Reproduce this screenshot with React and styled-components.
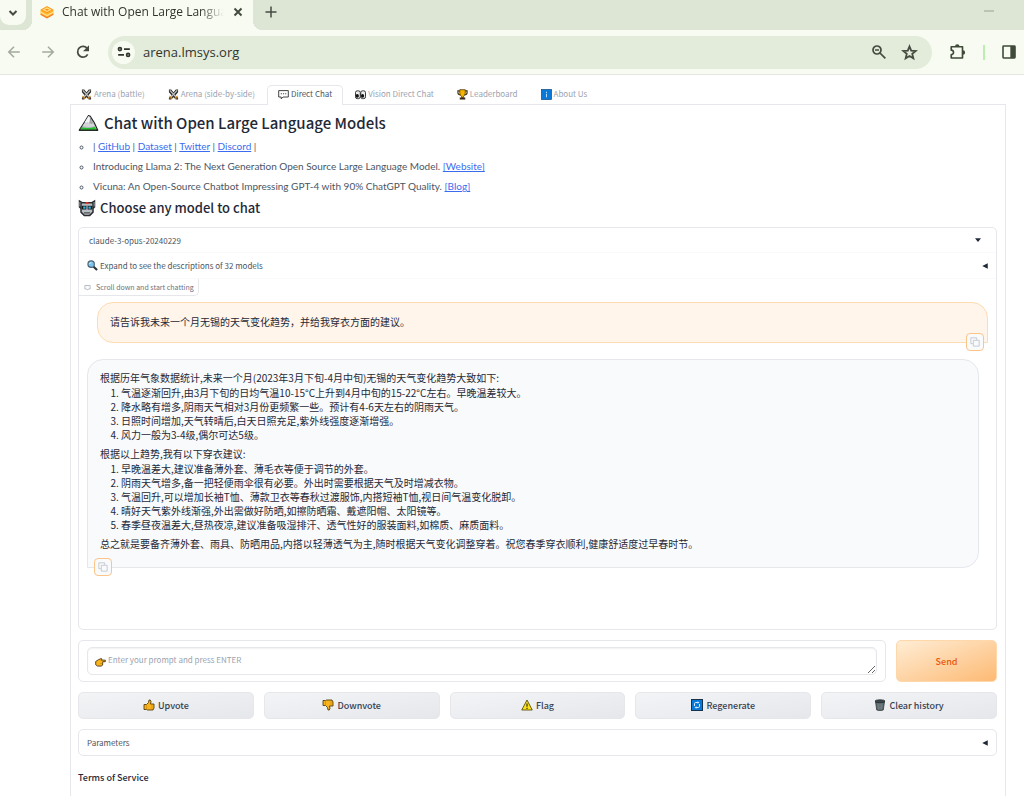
import React from 'react';
import styled, { createGlobalStyle, css } from 'styled-components';

const colors = {
  strip: '#dde6d5',
  toolbar: '#f8fbf1',
  pill: '#e3ecdb',
  chrome: '#454b41',
  border: '#e5e7eb',
  text: '#1f2937',
  body: '#4b5563',
  muted: '#9ca3af',
  link: '#3b6cf0',
};

const GlobalStyle = createGlobalStyle`
  * {
    box-sizing: border-box;
  }
  body {
    margin: 0;
    background: #fff;
    color: ${colors.text};
    font-family: 'Noto Sans CJK SC', 'Open Sans', sans-serif;
    font-size: 10px;
  }
  button, select, textarea {
    font-family: inherit;
    color: inherit;
  }
`;

const ButtonReset = css`
  display: flex;
  align-items: center;
  border: 0;
  padding: 0;
  background: none;
  cursor: pointer;
`;

/* browser frame */

const TabStrip = styled.div`
  display: flex;
  align-items: flex-start;
  height: 30px;
  background: ${colors.strip};
  font-family: 'Open Sans', 'Noto Sans', sans-serif;
`;

const TabSearch = styled.button`
  ${ButtonReset};
  justify-content: center;
  width: 26px;
  height: 25px;
  border-radius: 0 0 9px 9px;
  background: ${colors.toolbar};
`;

const BrowserTab = styled.div`
  position: relative;
  display: flex;
  align-items: center;
  gap: 8px;
  width: 221px;
  height: 30px;
  margin-left: 6px;
  padding: 0 9px 6px 8px;
  background: ${colors.toolbar};
  &::before,
  &::after {
    content: '';
    position: absolute;
    bottom: 0;
    width: 9px;
    height: 9px;
  }
  &::before {
    right: 100%;
    background: radial-gradient(circle at 0 0, transparent 9px, ${colors.toolbar} 9px);
  }
  &::after {
    left: 100%;
    background: radial-gradient(circle at 100% 0, transparent 9px, ${colors.toolbar} 9px);
  }
`;

const TabTitle = styled.span`
  flex: 1;
  overflow: hidden;
  white-space: nowrap;
  font-size: 12px;
  line-height: 18px;
  color: #30352d;
  mask-image: linear-gradient(to right, #000 85%, transparent);
`;

const StripButton = styled.button`
  ${ButtonReset};
  height: 24px;
  margin-left: ${props => props.$left || 0}px;
`;

const Spacer = styled.span`
  flex: 1;
`;

const Minimize = styled.button`
  ${ButtonReset};
  width: 10px;
  height: 22px;
  margin-right: 30px;
`;

const Toolbar = styled.div`
  display: flex;
  align-items: center;
  height: 45px;
  padding: 0 7px;
  background: ${colors.toolbar};
  border-bottom: 1px solid #e4e9df;
`;

const NavButtons = styled.div`
  display: flex;
  gap: 20px;
  margin-right: 17px;
`;

const IconButton = styled.button`
  ${ButtonReset};
`;

const AddressBar = styled.div`
  flex: 1;
  display: flex;
  align-items: center;
  gap: 8px;
  height: 33px;
  padding: 0 14px 0 4px;
  border-radius: 17px;
  background: ${colors.pill};
  font-family: 'Open Sans', 'Noto Sans', sans-serif;
`;

const SiteInfo = styled.button`
  ${ButtonReset};
  justify-content: center;
  width: 23px;
  height: 23px;
  border-radius: 50%;
  background: ${colors.toolbar};
`;

const Address = styled.input`
  flex: 1;
  min-width: 0;
  border: 0;
  padding: 0;
  outline: 0;
  background: none;
  font-family: inherit;
  font-size: 13px;
  color: #30352d;
`;

const AddressActions = styled.div`
  display: flex;
  gap: 14px;
`;

const ToolbarEnd = styled.div`
  display: flex;
  align-items: center;
  gap: 16px;
  margin-left: 17px;
`;

const Divider = styled.span`
  width: 2px;
  height: 15px;
  background: #bdeeb0;
`;

/* page */

const Page = styled.main`
  margin: 10px 18px 0 70px;
`;

const Tabs = styled.nav`
  display: flex;
  gap: 1px;
  height: 20px;
  border-bottom: 1px solid ${colors.border};
`;

const Tab = styled.button`
  ${ButtonReset};
  gap: 2px;
  height: 20px;
  padding: 0 10px 3px;
  border: 1px solid transparent;
  border-bottom: 0;
  border-radius: 5px 5px 0 0;
  font-size: 8px;
  line-height: 12px;
  color: ${colors.muted};
  white-space: nowrap;
  ${props =>
    props.$active &&
    css`
      border-color: ${colors.border};
      background: #fff;
      color: ${colors.body};
    `};
`;

const TabPanel = styled.section`
  padding: 7px 8px 11px 7px;
  border: 1px solid ${colors.border};
  border-top: 0;
`;

const Title = styled.h1`
  display: flex;
  align-items: center;
  gap: 5px;
  margin: 0;
  font-size: 15px;
  font-weight: 500;
  line-height: 20px;
`;

const Subtitle = styled(Title)`
  gap: 4px;
  font-size: 13px;
`;

const Notices = styled.ul`
  margin: 3px 0 2px;
  padding-left: 15px;
  list-style: circle;
  font-family: Lato, 'Open Sans', sans-serif;
  font-size: 10px;
  line-height: 20px;
  color: ${colors.body};
`;

const Link = styled.a`
  color: ${colors.link};
  text-decoration: underline;
`;

const ChatPanel = styled.div`
  height: 403px;
  margin-top: 9px;
  border: 1px solid ${colors.border};
  border-radius: 5px;
`;

const ModelRow = styled.label`
  display: flex;
  align-items: center;
  height: 25px;
  padding: 0 15px 0 10px;
  border-bottom: 1px solid #f9fafb;
`;

const ModelSelect = styled.select`
  flex: 1;
  appearance: none;
  border: 0;
  padding: 0;
  outline: 0;
  background: none;
  font-size: 8px;
  color: ${colors.body};
`;

const Accordion = styled.button`
  ${ButtonReset};
  gap: 2px;
  width: 100%;
  height: 26px;
  padding: 0 8px;
  border-bottom: 1px solid #f9fafb;
  font-size: 8px;
  color: ${colors.body};
`;

const ChatLabel = styled.div`
  display: flex;
  align-items: center;
  gap: 5px;
  width: fit-content;
  height: 17px;
  padding: 0 4px 0 5px;
  border: solid ${colors.border};
  border-width: 0 1px 1px 0;
  border-radius: 0 0 5px 0;
  font-size: 7px;
  line-height: 14px;
  color: #6b7280;
`;

const Messages = styled.div`
  display: flex;
  flex-direction: column;
  gap: 16px;
  padding: 6px 8px 0;
`;

const Bubble = styled.article`
  position: relative;
  padding: 12px;
  border: 1px solid ${colors.border};
  font-size: 10px;
  line-height: 14px;
  p {
    margin: 0 0 1px;
  }
  ol {
    margin: 0 0 5px;
    padding-left: 21px;
  }
`;

const UserBubble = styled(Bubble)`
  margin-left: 10px;
  border-color: #fddcb4;
  border-radius: 16px 16px 0 16px;
  background: #fff5eb;
`;

const BotBubble = styled(Bubble)`
  margin-right: 9px;
  padding: 11px 12px 15px;
  border-radius: 16px 16px 16px 0;
  background: #f9fafb;
`;

const CopyButton = styled.button`
  ${ButtonReset};
  position: absolute;
  bottom: -9px;
  ${props => (props.$side === 'right' ? 'right: 3px' : 'left: 6px')};
  justify-content: center;
  width: 18px;
  height: 18px;
  border: 1px solid #fdc48a;
  border-radius: 4px;
  background: #f9fafb;
`;

const PromptRow = styled.form`
  display: flex;
  gap: 10px;
  margin-top: 10px;
`;

const PromptBox = styled.label`
  flex: 1;
  padding: 6px 8px;
  border: 1px solid ${colors.border};
  border-radius: 5px;
`;

const PromptField = styled.span`
  display: flex;
  align-items: center;
  gap: 2px;
  height: 28px;
  padding-left: 7px;
  border: 1px solid ${colors.border};
  border-radius: 5px;
  box-shadow: inset 0 1px 2px rgba(0, 0, 0, 0.06);
`;

const Prompt = styled.textarea`
  flex: 1;
  height: 26px;
  border: 0;
  padding: 6px 0;
  outline: 0;
  resize: vertical;
  overflow: hidden;
  background: none;
  font-size: 8px;
  line-height: 12px;
  &::placeholder {
    color: ${colors.muted};
  }
`;

const SendButton = styled.button`
  width: 101px;
  border: 1px solid #fed7aa;
  border-radius: 5px;
  background: linear-gradient(to bottom right, #ffedd5, #fdba74);
  font-size: 9px;
  font-weight: 500;
  color: #ea580c;
`;

const Actions = styled.div`
  display: grid;
  grid-template-columns: repeat(5, 1fr);
  gap: 10px;
  margin: 10px 0;
`;

const Action = styled.button`
  ${ButtonReset};
  justify-content: center;
  gap: 3px;
  height: 27px;
  padding-bottom: 1px;
  border: 1px solid ${colors.border};
  border-radius: 5px;
  background: linear-gradient(to bottom right, #f3f4f6, #e5e7eb);
  font-size: 9px;
  font-weight: 500;
  color: #374151;
`;

const Parameters = styled(Accordion)`
  justify-content: space-between;
  height: 27px;
  border: 1px solid ${colors.border};
  border-radius: 5px;
`;

const Terms = styled.h2`
  margin: 15px 0 0;
  font-size: 9px;
  font-weight: 500;
  line-height: 14px;
`;

/* icons */

const Icon = ({ size = 12, box = 24, children }) => (
  <svg width={size} height={size} viewBox={`0 0 ${box} ${box}`} fill="none" aria-hidden="true">
    {children}
  </svg>
);

const Stroke = ({ size, color = colors.chrome, width = 2, d }) => (
  <Icon size={size}>
    <path d={d} stroke={color} strokeWidth={width} />
  </Icon>
);

const Favicon = () => (
  <Icon size={14}>
    <path d="M12 2l11 6v8l-11 6L1 16V8z" fill="#ffb52e" />
    <path d="M12 2l11 6-11 6L1 8z" fill="#ff9417" />
    <path d="M1 12l11 6 11-6M6 8l6-3 6 3-6 3z" stroke="#ffe08a" strokeWidth="2" />
    <path d="M1 16l11 6 11-6" stroke="#f47b20" strokeWidth="2" />
  </Icon>
);

const Reload = () => (
  <Icon size={16}>
    <path d="M19 15.5A8 8 0 1 1 18.5 7" stroke={colors.chrome} strokeWidth="2.6" />
    <path d="M21 2v9h-9z" fill={colors.chrome} />
  </Icon>
);

const Tune = () => (
  <Icon size={14}>
    <g stroke="#30352d" strokeWidth="3">
      <circle cx="5" cy="7" r="2.5" />
      <path d="M12 7h10M2 17h10" />
      <circle cx="19" cy="17" r="2.5" />
    </g>
  </Icon>
);

const ZoomOut = () => (
  <Icon size={16}>
    <g stroke={colors.chrome} strokeWidth="2.6">
      <circle cx="9" cy="9" r="6" />
      <path d="M13.5 13.5l8 8M6 9h6" />
    </g>
  </Icon>
);

const Star = () => (
  <Icon size={17}>
    <path
      d="M12 3.5l2.4 5.9 6.4.5-4.9 4.1 1.5 6.2-5.4-3.3-5.4 3.3 1.5-6.2-4.9-4.1 6.4-.5z"
      stroke={colors.chrome}
      strokeWidth="2.6"
    />
  </Icon>
);

const Puzzle = () => (
  <Icon size={18}>
    <path
      d="M3 5h15v15H3v-4.5a3 3 0 0 0 0-6z"
      stroke="#3f4a38"
      strokeWidth="2.2"
      strokeLinejoin="round"
    />
    <path d="M8 4.5a3 3 0 0 1 6 0zM18.5 9.5a3 3 0 0 1 0 6z" fill="#3f4a38" />
  </Icon>
);

const SidePanel = () => (
  <Icon size={16}>
    <rect x="3" y="3" width="18" height="18" rx="1" stroke="#3f4a38" strokeWidth="2.4" />
    <path d="M14 3h7v18h-7z" fill="#3f4a38" />
  </Icon>
);

const Swords = () => (
  <Icon size={11}>
    <path d="M2 1h5l5 6 5-6h5v6l-6 7 6 5v4h-5l-5-5-5 5H2v-4l6-5-6-7z" fill="#33312d" />
    <path d="M4 3l14 15M20 3L6 18" stroke="#c2c4c6" strokeWidth="2.4" />
    <path d="M3 15l6 6M21 15l-6 6" stroke="#e0a030" strokeWidth="2.6" />
    <path d="M4 21l3-3M20 21l-3-3" stroke="#a86a20" strokeWidth="2.4" />
  </Icon>
);

const Balloon = () => (
  <Icon size={11}>
    <path d="M1.5 3.5h21v14H11l-4 4v-4H1.5z" fill="#fff" stroke="#333" strokeWidth="2" />
    <path d="M6 10.5h2.5m2.3 0h2.5m2.3 0H18" stroke="#444" strokeWidth="2.4" />
  </Icon>
);

const Eyes = () => (
  <Icon size={11}>
    <g fill="#eceef0" stroke="#222" strokeWidth="2">
      <rect x="1" y="4" width="10.5" height="17" rx="4" />
      <rect x="12.5" y="4" width="10.5" height="17" rx="4" />
    </g>
    <ellipse cx="5" cy="15" rx="3.5" ry="4" fill="#111" />
    <ellipse cx="16.5" cy="15" rx="3.5" ry="4" fill="#111" />
  </Icon>
);

const Trophy = () => (
  <Icon size={11}>
    <path d="M6 4H2v4q0 5 6 5M18 4h4v4q0 5-6 5" stroke="#3a2c0a" strokeWidth="2.4" />
    <path d="M6 1.5h12V9q0 5-4 7v3h-4v-3q-4-2-4-7z" fill="#f7b500" stroke="#3a2c0a" strokeWidth="1.6" />
    <path d="M6 18.5h12V23H6z" fill="#3a2c1a" />
  </Icon>
);

const Info = () => (
  <Icon size={11}>
    <rect x="1" y="1" width="22" height="22" fill="#0a78d6" stroke="#0c4a86" strokeWidth="1.5" />
    <path d="M12 6v2.500M12 10.500V18" stroke="#b9dcf8" strokeWidth="2.2" />
  </Icon>
);

const Mountain = () => (
  <Icon size={21}>
    <path d="M1.5 20.5L8 10.5l4-6.5 2 1 4.5 7 4 8.5z" fill="#b9bdc1" stroke="#222" strokeWidth="1.3" strokeLinejoin="round" />
    <path d="M8 11l4-6.3 2 1.3-1 5-1.5 2-1-2-1.5 3z" fill="#f3f4f5" />
    <path d="M5 16l3-4 2 2 1.5-2 2 2 3-2 2.5 4-6 1z" fill="#d4d7da" />
    <path d="M14 6l1 7 3-1" stroke="#8d9297" />
    <path d="M2.5 20l1.5-2.5q8 1.5 15-.5l2 3z" fill="#22c02c" />
    <path d="M1 21h22" stroke="#1b2a1b" strokeWidth="1.3" />
  </Icon>
);

const Robot = () => (
  <Icon size={18}>
    <path d="M1 1l5 3h12l5-3v10l-2 2v5l-5 5H8l-5-5v-5l-2-2z" fill="#2b2d30" />
    <path d="M5 6h14v11l-4 4H9l-4-4z" fill="#b9bec3" />
    <path d="M2.5 4v6M21.5 4v6" stroke="#8e949a" strokeWidth="1.5" />
    <path d="M5 9h14v5H5z" fill="#15181b" />
    <path d="M7 11.5h3m4 0h3" stroke="#2fb5e8" strokeWidth="3" />
    <path d="M10 5.5h4" stroke="#e5392f" strokeWidth="2.5" />
    <path d="M8 18.5h8" stroke="#44494e" strokeWidth="1.6" />
    <path d="M12 9v6" stroke="#b9bec3" strokeWidth="1.6" />
  </Icon>
);

const Magnifier = () => (
  <Icon size={11}>
    <path d="M14 14l8 8" stroke="#2d3338" strokeWidth="4.5" />
    <circle cx="9" cy="9" r="7" fill="#7cc3ee" stroke="#4b6272" strokeWidth="2.4" />
    <path d="M5.5 9Q6 5.5 9.5 5.5" stroke="#def2fd" strokeWidth="2" />
  </Icon>
);

const Point = () => (
  <Icon size={11}>
    <path
      d="M1.5 12l6-4 6-2.500 2 1.500-2 2h9v3.500H17l-.5 7.500-3 2h-8l-4-3z"
      fill="#f9b31c"
      stroke="#3d2b08"
      strokeWidth="1.8"
      strokeLinejoin="round"
    />
    <path d="M11 16.5h5" stroke="#b87908" strokeWidth="1.3" />
  </Icon>
);

const thumbPath = 'M2 11h5l4-4 1-5h2.5l1.5 3-1 5h7v8l-2 4H9l-2-1H2z';

const ThumbUp = () => (
  <Icon size={12}>
    <path d={thumbPath} fill="#f9b31c" stroke="#4a3609" strokeWidth="1.7" strokeLinejoin="round" />
    <path d="M7 11v10M16 14h6M16 18h5" stroke="#c98710" strokeWidth="1.3" />
  </Icon>
);

const ThumbDown = () => (
  <Icon size={12}>
    <g transform="matrix(1 0 0 -1 0 24)">
      <path d={thumbPath} fill="#f9b31c" stroke="#4a3609" strokeWidth="1.7" strokeLinejoin="round" />
      <path d="M7 11v10M16 14h6M16 18h5" stroke="#c98710" strokeWidth="1.3" />
    </g>
  </Icon>
);

const Warning = () => (
  <Icon size={12}>
    <path d="M12 2l10.5 20h-21z" fill="#fbe116" stroke="#4d4607" strokeWidth="1.7" strokeLinejoin="round" />
    <path d="M12 9v6.5M12 17.5V20" stroke="#222" strokeWidth="2.2" />
  </Icon>
);

const Refresh = () => (
  <Icon size={12}>
    <rect x="1" y="1" width="22" height="22" fill="#0a78d6" stroke="#17324d" strokeWidth="2" />
    <path d="M7 14V9.5Q7 7 9.5 7H14M17 10v4.5q0 2.5-2.5 2.5H10" stroke="#d5e9fa" strokeWidth="2" />
    <path d="M13 4.5v5L17 7zM11 14.5v5L7 17z" fill="#d5e9fa" />
  </Icon>
);

const Trash = () => (
  <Icon size={12}>
    <path d="M3 5l2.5 17q6.5 2 13 0L21 5z" fill="#5f6b70" stroke="#2a2f31" strokeWidth="1.5" />
    <ellipse cx="12" cy="4.5" rx="10" ry="3" fill="#39464a" stroke="#25292b" strokeWidth="1.5" />
    <path d="M8 9l1 12M12 9v12M16 9l-1 12" stroke="#859297" />
  </Icon>
);

const LabelIcon = () => (
  <Icon size={7}>
    <path d="M3 5h18v12h-6l-3 4-3-4H3zM8 10h1m6 0h1" stroke="#9ca3af" strokeWidth="2.4" />
  </Icon>
);

const Copy = () => (
  <Icon size={10}>
    <path d="M8 8h14v14H8zM16 7V2H2v14h5" stroke="#c3c7ce" strokeWidth="2.2" />
  </Icon>
);

const Triangle = ({ down }) => (
  <Icon size={6}>
    <path d={down ? 'M0 5h24L12 20z' : 'M23 1v22L1 12z'} fill="#1f2937" />
  </Icon>
);

/* data */

const tabs = [
  { label: 'Arena (battle)', icon: <Swords /> },
  { label: 'Arena (side-by-side)', icon: <Swords /> },
  { label: 'Direct Chat', icon: <Balloon />, active: true },
  { label: 'Vision Direct Chat', icon: <Eyes /> },
  { label: 'Leaderboard', icon: <Trophy /> },
  { label: 'About Us', icon: <Info /> },
];

const links = ['GitHub', 'Dataset', 'Twitter', 'Discord'];

const trends = [
  '气温逐渐回升,由3月下旬的日均气温10-15°C上升到4月中旬的15-22°C左右。早晚温差较大。',
  '降水略有增多,阴雨天气相对3月份更频繁一些。预计有4-6天左右的阴雨天气。',
  '日照时间增加,天气转晴后,白天日照充足,紫外线强度逐渐增强。',
  '风力一般为3-4级,偶尔可达5级。',
];

const advice = [
  '早晚温差大,建议准备薄外套、薄毛衣等便于调节的外套。',
  '阴雨天气增多,备一把轻便雨伞很有必要。外出时需要根据天气及时增减衣物。',
  '气温回升,可以增加长袖T恤、薄款卫衣等春秋过渡服饰,内搭短袖T恤,视日间气温变化脱卸。',
  '晴好天气紫外线渐强,外出需做好防晒,如擦防晒霜、戴遮阳帽、太阳镜等。',
  '春季昼夜温差大,昼热夜凉,建议准备吸湿排汗、透气性好的服装面料,如棉质、麻质面料。',
];

const actions = [
  { label: 'Upvote', icon: <ThumbUp /> },
  { label: 'Downvote', icon: <ThumbDown /> },
  { label: 'Flag', icon: <Warning /> },
  { label: 'Regenerate', icon: <Refresh /> },
  { label: 'Clear history', icon: <Trash /> },
];

const Browser = () => (
  <header>
    <TabStrip>
      <TabSearch aria-label="Search tabs">
        <Stroke size={12} width={4} d="M5 8l7 7 7-7" />
      </TabSearch>
      <BrowserTab>
        <Favicon />
        <TabTitle>Chat with Open Large Language Models</TabTitle>
        <StripButton aria-label="Close tab">
          <Stroke size={12} width={4} d="M5 5l14 14M19 5L5 19" />
        </StripButton>
      </BrowserTab>
      <StripButton $left={12} aria-label="New tab">
        <Stroke size={12} width={3} d="M12 1v22M1 12h22" />
      </StripButton>
      <Spacer />
      <Minimize aria-label="Minimize">
        <Stroke size={10} width={4} color="#b3bdab" d="M0 12h24" />
      </Minimize>
    </TabStrip>
    <Toolbar>
      <NavButtons>
        <IconButton aria-label="Back">
          <Stroke size={14} width={2.6} color="#a4aa9e" d="M22 12H4M12 3l-9 9 9 9" />
        </IconButton>
        <IconButton aria-label="Forward">
          <Stroke size={14} width={2.6} color="#a4aa9e" d="M2 12h18M12 3l9 9-9 9" />
        </IconButton>
        <IconButton aria-label="Reload">
          <Reload />
        </IconButton>
      </NavButtons>
      <AddressBar>
        <SiteInfo aria-label="Site information">
          <Tune />
        </SiteInfo>
        <Address aria-label="Address" defaultValue="arena.lmsys.org" />
        <AddressActions>
          <IconButton aria-label="Zoom">
            <ZoomOut />
          </IconButton>
          <IconButton aria-label="Bookmark">
            <Star />
          </IconButton>
        </AddressActions>
      </AddressBar>
      <ToolbarEnd>
        <IconButton aria-label="Extensions">
          <Puzzle />
        </IconButton>
        <Divider />
        <IconButton aria-label="Side panel">
          <SidePanel />
        </IconButton>
      </ToolbarEnd>
    </Toolbar>
  </header>
);

const Chat = () => (
  <ChatPanel>
    <ModelRow>
      <ModelSelect aria-label="Model">
        <option>claude-3-opus-20240229</option>
      </ModelSelect>
      <Triangle down />
    </ModelRow>
    <Accordion>
      <Magnifier />
      Expand to see the descriptions of 32 models
      <Spacer />
      <Triangle />
    </Accordion>
    <ChatLabel>
      <LabelIcon />
      Scroll down and start chatting
    </ChatLabel>
    <Messages>
      <UserBubble>
        <p>请告诉我未来一个月无锡的天气变化趋势，并给我穿衣方面的建议。</p>
        <CopyButton $side="right" aria-label="Copy message">
          <Copy />
        </CopyButton>
      </UserBubble>
      <BotBubble>
        <p>根据历年气象数据统计,未来一个月(2023年3月下旬-4月中旬)无锡的天气变化趋势大致如下:</p>
        <ol>
          {trends.map(item => (
            <li key={item}>{item}</li>
          ))}
        </ol>
        <p>根据以上趋势,我有以下穿衣建议:</p>
        <ol>
          {advice.map(item => (
            <li key={item}>{item}</li>
          ))}
        </ol>
        <p>总之就是要备齐薄外套、雨具、防晒用品,内搭以轻薄透气为主,随时根据天气变化调整穿着。祝您春季穿衣顺利,健康舒适度过早春时节。</p>
        <CopyButton $side="left" aria-label="Copy message">
          <Copy />
        </CopyButton>
      </BotBubble>
    </Messages>
  </ChatPanel>
);

const App = () => (
  <>
    <GlobalStyle />
    <Browser />
    <Page>
      <Tabs>
        {tabs.map(({ label, icon, active }) => (
          <Tab key={label} $active={active}>
            {icon}
            {label}
          </Tab>
        ))}
      </Tabs>
      <TabPanel>
        <Title>
          <Mountain />
          Chat with Open Large Language Models
        </Title>
        <Notices>
          <li>
            |{' '}
            {links.map(link => (
              <React.Fragment key={link}>
                <Link href="#">{link}</Link> |{' '}
              </React.Fragment>
            ))}
          </li>
          <li>
            Introducing Llama 2: The Next Generation Open Source Large Language Model.{' '}
            <Link href="#">[Website]</Link>
          </li>
          <li>
            Vicuna: An Open-Source Chatbot Impressing GPT-4 with 90% ChatGPT Quality.{' '}
            <Link href="#">[Blog]</Link>
          </li>
        </Notices>
        <Subtitle as="h2">
          <Robot />
          Choose any model to chat
        </Subtitle>
        <Chat />
        <PromptRow>
          <PromptBox>
            <PromptField>
              <Point />
              <Prompt aria-label="Prompt" placeholder="Enter your prompt and press ENTER" />
            </PromptField>
          </PromptBox>
          <SendButton type="button">Send</SendButton>
        </PromptRow>
        <Actions>
          {actions.map(({ label, icon }) => (
            <Action key={label}>
              {icon}
              {label}
            </Action>
          ))}
        </Actions>
        <Parameters>
          Parameters
          <Triangle />
        </Parameters>
        <Terms>Terms of Service</Terms>
      </TabPanel>
    </Page>
  </>
);

export default App;
